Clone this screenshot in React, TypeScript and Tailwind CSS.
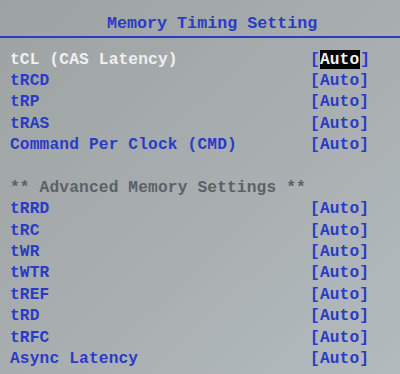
import React from "react";

const top = [
  { l: "tCL (CAS Latency)", sel: true },
  { l: "tRCD" },
  { l: "tRP" },
  { l: "tRAS" },
  { l: "Command Per Clock (CMD)" },
];
const bottom = ["tRRD", "tRC", "tWR", "tWTR", "tREF", "tRD", "tRFC", "Async Latency"];

function Row({ label, sel }: { label: string; sel?: boolean }) {
  return (
    <div className="flex h-[21.4px] items-center">
      <div className={`w-[310px] pl-[10px] ${sel ? "text-[#eef0f2]" : "text-[#2b3bc6]"}`}>{label}</div>
      <div className="flex items-center text-[#2b3bc6]">
        <span>[</span>
        {sel ? (
          <span className="inline-flex h-[19px] items-center bg-[#050505] pr-[1px] text-[#f2f2f2]">Auto</span>
        ) : (
          <span>Auto</span>
        )}
        <span>]</span>
      </div>
    </div>
  );
}

export default function App() {
  return (
    <div
      className="w-[400px] h-[374px] overflow-hidden bg-gradient-to-br from-[#9da2a2] to-[#b3babd] text-[16.2px] font-bold tracking-[0.15px]"
      style={{ fontFamily: '"Liberation Mono", "DejaVu Sans Mono", monospace' }}
    >
      <div className="h-[36px] flex items-center pt-[12px] pl-[107px] text-[#2b3bc6] text-[16.7px] tracking-normal">
        Memory Timing Setting
      </div>
      <div className="h-[2px] bg-[#2b3bc6]" />
      <div className="pt-[11px]">
        {top.map((r) => (
          <Row key={r.l} label={r.l} sel={r.sel} />
        ))}
        <div className="h-[21.4px]" />
        <div className="flex h-[21.4px] items-center pl-[10px] text-[#5c6166]">** Advanced Memory Settings **</div>
        {bottom.map((l) => (
          <Row key={l} label={l} />
        ))}
      </div>
    </div>
  );
}
